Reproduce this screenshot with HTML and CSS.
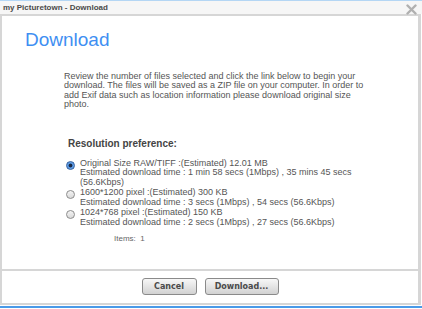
FILE: index.html
```html
<!DOCTYPE html>
<html lang="en">
<head>
    <meta charset="UTF-8">
    <title>my Picturetown - Download</title>
    <link rel="stylesheet" href="styles.css">
</head>
<body>
    <div class="top-line"></div>
    <div class="window">
        <header class="title-bar">
            <span class="title-text">my Picturetown - Download</span>
            <button class="close-btn" aria-label="Close">
                <svg width="11" height="11" viewBox="0 0 11 11">
                    <path d="M1.5 1.5 L9.5 9.5 M9.5 1.5 L1.5 9.5" stroke="#b0b0b0" stroke-width="2.4" stroke-linecap="round"/>
                </svg>
            </button>
        </header>

        <div class="panel">
            <main class="content">
                <h1 class="heading">Download</h1>
                <p class="intro">Review the number of files selected and click the link below to begin your download. The files will be saved as a ZIP file on your computer. In order to add Exif data such as location information please download original size photo.</p>

                <h2 class="section-title">Resolution preference:</h2>

                <div class="options">
                    <label class="option">
                        <span class="radio checked"></span>
                        <span class="option-text">Original Size RAW/TIFF :(Estimated) 12.01 MB<br>Estimated download time : 1 min 58 secs (1Mbps) , 35 mins 45 secs (56.6Kbps)</span>
                    </label>
                    <label class="option">
                        <span class="radio"></span>
                        <span class="option-text">1600*1200 pixel :(Estimated) 300 KB<br>Estimated download time : 3 secs (1Mbps) , 54 secs (56.6Kbps)</span>
                    </label>
                    <label class="option">
                        <span class="radio"></span>
                        <span class="option-text">1024*768 pixel :(Estimated) 150 KB<br>Estimated download time : 2 secs (1Mbps) , 27 secs (56.6Kbps)</span>
                    </label>
                </div>

                <div class="items">Items:&nbsp; 1</div>
            </main>

            <footer class="footer">
                <button class="btn btn-cancel">Cancel</button>
                <button class="btn btn-download">Download...</button>
            </footer>
        </div>
    </div>
    <div class="bottom-line"></div>
</body>
</html>
```

FILE: styles.css
```css
* {
    margin: 0;
    padding: 0;
    box-sizing: border-box;
}

body {
    font-family: "Liberation Sans", Arial, sans-serif;
    background-color: #ffffff;
    color: #4a4a4a;
    width: 422px;
    height: 309px;
    overflow: hidden;
}

.top-line {
    height: 1px;
    background-color: #b4d6f4;
}

.title-bar {
    height: 13px;
    display: flex;
    justify-content: space-between;
    align-items: center;
    padding: 0 4px 0 3px;
    background-color: #f6f6f6;
}

.title-text {
    font-size: 8px;
    font-weight: bold;
    color: #4a4a4a;
}

.close-btn {
    background: none;
    border: none;
    display: flex;
    margin-top: 3px;
    margin-right: 1px;
}

.panel {
    width: 421px;
    height: 291px;
    border: 2px solid #d6d6d6;
    border-right-width: 3px;
    background-color: #ffffff;
    display: flex;
    flex-direction: column;
}

.content {
    flex: 1;
    padding: 14px 0 0 23px;
}

.heading {
    font-size: 19px;
    font-weight: normal;
    line-height: 20px;
    color: #3f8ff2;
}

.intro {
    margin: 22px 0 0 39px;
    width: 300px;
    font-size: 9px;
    line-height: 9.4px;
    color: #555555;
}

.section-title {
    margin: 28px 0 0 43px;
    font-size: 10px;
    font-weight: bold;
    color: #444444;
}

.options {
    margin: 10px 0 0 41px;
    display: flex;
    flex-direction: column;
    gap: 1px;
}

.option {
    display: flex;
    align-items: flex-start;
    gap: 5px;
}

.radio {
    flex: none;
    width: 9px;
    height: 9px;
    margin-top: 2px;
    border-radius: 50%;
    border: 1px solid #8c8c8c;
    background: linear-gradient(#f4f4f4, #d9d9d9);
}

.radio.checked {
    border-color: #2d5d9e;
    background: radial-gradient(circle, #1b2a44 0 1.6px, #4d8fdd 2.2px, #9ec6f2 100%);
}

.option-text {
    width: 275px;
    font-size: 9px;
    line-height: 9.5px;
    color: #555555;
}

.items {
    margin: 7px 0 0 89px;
    font-size: 8px;
    color: #666666;
}

.footer {
    height: 34px;
    border-top: 2px solid #d6d6d6;
    display: flex;
    justify-content: center;
    align-items: center;
    gap: 8px;
    padding-bottom: 2px;
}

.btn {
    height: 17px;
    border: 1px solid #8a8a8a;
    border-radius: 3px;
    background: linear-gradient(#f7f7f7, #d2d2d2);
    font-family: "DejaVu Sans", sans-serif;
    font-size: 8px;
    font-weight: bold;
    color: #4a4a4a;
    cursor: pointer;
}

.btn-cancel {
    width: 55px;
}

.btn-download {
    width: 74px;
}

.bottom-line {
    margin-top: 1px;
    height: 2px;
    background-color: #4a9ae8;
}
```
